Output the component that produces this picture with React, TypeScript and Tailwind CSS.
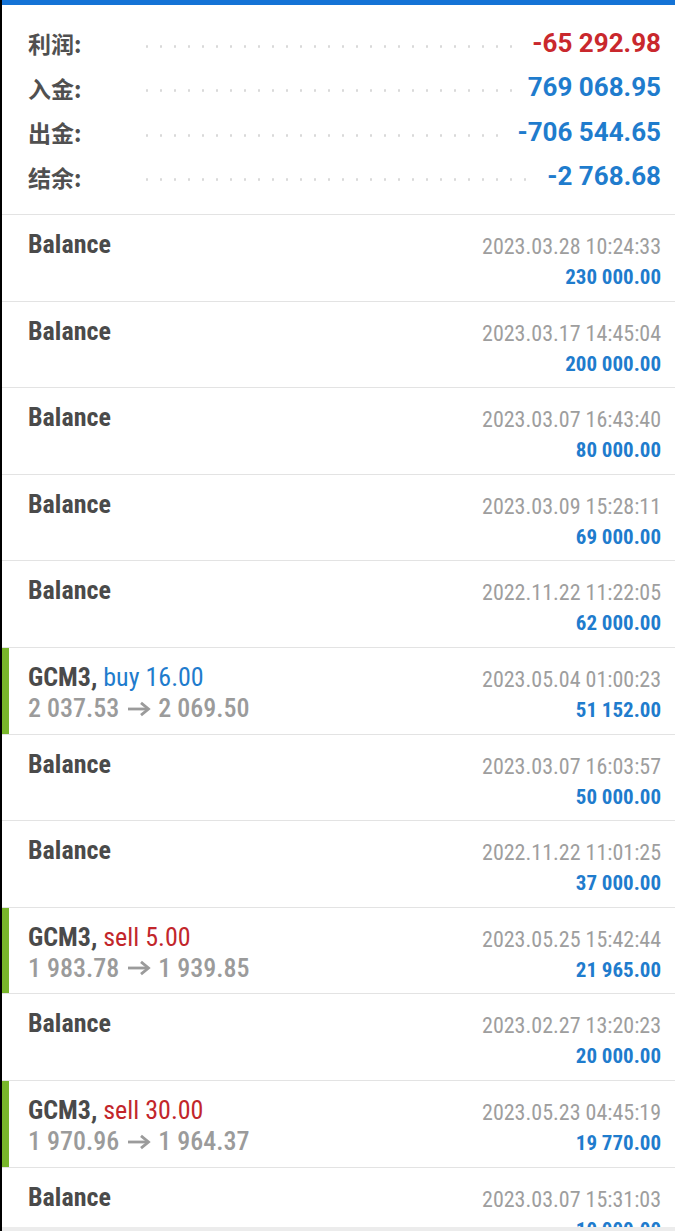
import React from "react";

type Row =
  | { kind: "balance"; time: string; amount: string }
  | {
      kind: "trade";
      symbol: string;
      side: "buy" | "sell";
      volume: string;
      from: string;
      to: string;
      time: string;
      amount: string;
    };

const summary = [
  { label: "利润:", value: "-65 292.98", red: true },
  { label: "入金:", value: "769 068.95" },
  { label: "出金:", value: "-706 544.65" },
  { label: "结余:", value: "-2 768.68" },
];

const rows: Row[] = [
  { kind: "balance", time: "2023.03.28 10:24:33", amount: "230 000.00" },
  { kind: "balance", time: "2023.03.17 14:45:04", amount: "200 000.00" },
  { kind: "balance", time: "2023.03.07 16:43:40", amount: "80 000.00" },
  { kind: "balance", time: "2023.03.09 15:28:11", amount: "69 000.00" },
  { kind: "balance", time: "2022.11.22 11:22:05", amount: "62 000.00" },
  {
    kind: "trade",
    symbol: "GCM3",
    side: "buy",
    volume: "16.00",
    from: "2 037.53",
    to: "2 069.50",
    time: "2023.05.04 01:00:23",
    amount: "51 152.00",
  },
  { kind: "balance", time: "2023.03.07 16:03:57", amount: "50 000.00" },
  { kind: "balance", time: "2022.11.22 11:01:25", amount: "37 000.00" },
  {
    kind: "trade",
    symbol: "GCM3",
    side: "sell",
    volume: "5.00",
    from: "1 983.78",
    to: "1 939.85",
    time: "2023.05.25 15:42:44",
    amount: "21 965.00",
  },
  { kind: "balance", time: "2023.02.27 13:20:23", amount: "20 000.00" },
  {
    kind: "trade",
    symbol: "GCM3",
    side: "sell",
    volume: "30.00",
    from: "1 970.96",
    to: "1 964.37",
    time: "2023.05.23 04:45:19",
    amount: "19 770.00",
  },
  { kind: "balance", time: "2023.03.07 15:31:03", amount: "10 000.00" },
];

const cond = "font-['Roboto_Condensed','Liberation_Sans_Narrow',Roboto,sans-serif] font-stretch-condensed";

function Arrow() {
  return (
    <svg width="24" height="16" viewBox="0 0 24 16" className="ml-[8px] mr-[7px] mb-[3px] inline-block align-middle">
      <path d="M1 8H21" stroke="#9b9b9b" strokeWidth="2.8" fill="none" />
      <path d="M14 1.8L21.5 8L14 14.2" stroke="#9b9b9b" strokeWidth="2.8" fill="none" />
    </svg>
  );
}

function HistoryRow({ row }: { row: Row }) {
  return (
    <div className="relative flex h-[86.6px] shrink-0 justify-between border-b border-[#e3e3e3] pl-[26px] pr-[14px] pt-[13px]">
      {row.kind === "trade" ? (
        <div className="absolute left-0 top-0 h-full w-[7px] bg-[#78b62a]" />
      ) : null}
      <div className="flex flex-col">
        {row.kind === "balance" ? (
          <div className="text-[26px] font-bold leading-[32px] text-[#4a4a4a]">Balance</div>
        ) : (
          <>
            <div className="text-[26px] leading-[32px]">
              <span className="font-bold text-[#4a4a4a]">{row.symbol}, </span>
              <span className={row.side === "buy" ? "text-[#1f7ccd]" : "text-[#c2262b]"}>
                {row.side} {row.volume}
              </span>
            </div>
            <div className="whitespace-nowrap text-[26px] font-medium leading-[30px] text-[#9b9b9b]">
              {row.from}
              <Arrow />
              {row.to}
            </div>
          </>
        )}
      </div>
      <div className="flex flex-col items-end">
        <div className="mt-[3px] text-[22px] leading-[32px] text-[#9e9e9e]">{row.time}</div>
        <div className="text-[21px] font-bold leading-[29px] text-[#1f7ccd]">{row.amount}</div>
      </div>
    </div>
  );
}

export default function App() {
  return (
    <div className={`flex h-[1231px] w-[675px] flex-col overflow-hidden bg-black pl-[2px] ${cond}`}>
      <div className="flex h-full flex-col overflow-hidden bg-white">
        <div className="h-[5px] shrink-0 bg-[#1473d6]" />
        <div className="flex min-h-0 flex-1 flex-col overflow-hidden">
          <div className="flex shrink-0 flex-col border-b border-[#e3e3e3] pb-[15px] pt-[16px]">
            {summary.map((s) => (
              <div key={s.label} className="flex h-[44.5px] items-center pl-[26px] pr-[14px]">
                <div className="w-[110px] shrink-0 font-['Noto_Sans_CJK_SC',sans-serif] text-[23px] font-bold text-[#505050]">
                  {s.label}
                </div>
                <div className="ml-[2px] mr-[14px] mt-[6px] h-[3px] flex-1 bg-[radial-gradient(circle,#d9d9d9_1px,transparent_1.5px)] bg-[length:14px_3px]" />
                <div
                  className={`font-['Roboto',sans-serif] text-[26px] font-bold font-stretch-normal ${
                    s.red ? "text-[#c9282d]" : "text-[#1f7ccd]"
                  }`}
                >
                  {s.value}
                </div>
              </div>
            ))}
          </div>
          {rows.map((r, i) => (
            <HistoryRow key={i} row={r} />
          ))}
        </div>
        <div className="h-[4px] shrink-0 bg-[#ececec]" />
      </div>
    </div>
  );
}
